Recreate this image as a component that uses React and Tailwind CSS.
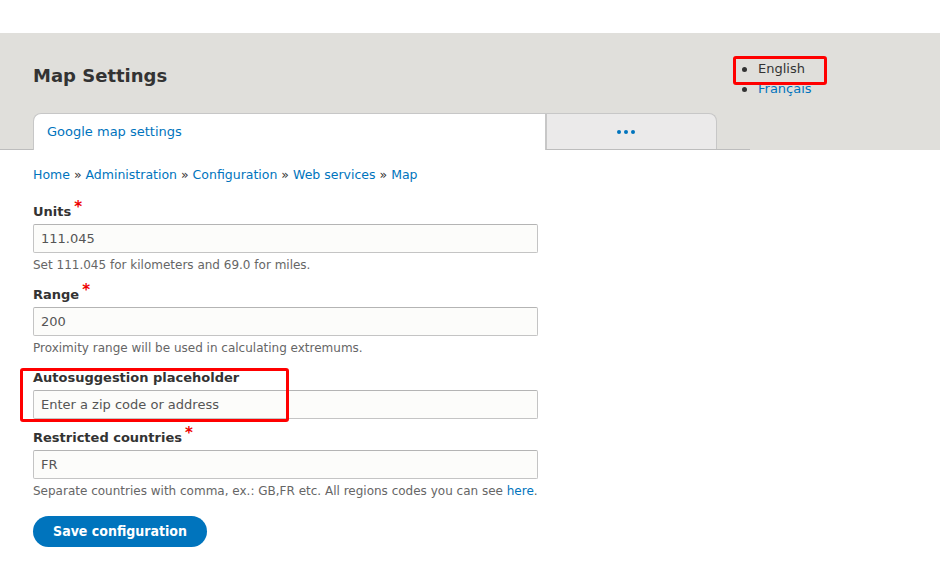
import React from "react";

const fields = [
  {
    label: "Units",
    required: true,
    value: "111.045",
    desc: "Set 111.045 for kilometers and 69.0 for miles.",
  },
  {
    label: "Range",
    required: true,
    value: "200",
    desc: "Proximity range will be used in calculating extremums.",
  },
  {
    label: "Autosuggestion placeholder",
    required: false,
    value: "Enter a zip code or address",
  },
  {
    label: "Restricted countries",
    required: true,
    value: "FR",
    desc: (
      <>
        Separate countries with comma, ex.: GB,FR etc. All regions codes you can see{" "}
        <a className="text-[#0074bd]">here</a>.
      </>
    ),
  },
];

const crumbs = ["Home", "Administration", "Configuration", "Web services", "Map"];

const Field = ({ label, required, value, desc, top }) => (
  <div className={top}>
    <label className="block h-[18px] text-[13px] leading-[18px] font-bold text-[#333]">
      {label}
      {required && (
        <span className="text-[#e00] text-[15px] leading-[0] ml-[3px] relative -top-[4px]">*</span>
      )}
    </label>
    <div className="mt-[3px] w-[505px] h-[29px] border border-[#c4c4c4] border-t-[#b4b4b4] bg-[#fcfcfa] rounded-[2px] px-[7px] flex items-center text-[13px] text-[#555]">
      {value}
    </div>
    {desc && <div className="mt-[4px] text-[12px] leading-[16px] text-[#666]">{desc}</div>}
  </div>
);

export default function App() {
  return (
    <div className="relative w-[940px] h-[582px] bg-white font-['DejaVu_Sans',sans-serif] overflow-hidden">
      <div className="h-[33px]" />

      {/* Header */}
      <div className="flex bg-[#e0dfdb] h-[117px]">
        <div className="w-[750px] flex flex-col">
          <h1 className="pl-[33px] pt-[31px] text-[18px] leading-[24px] font-bold text-[#333]">
            Map Settings
          </h1>
          <div className="mt-auto flex items-end pl-[33px] border-b border-[#bdbdbd] h-[37px]">
            <div className="w-[513px] h-[37px] -mb-px bg-white border border-b-0 border-[#c7c7c7] rounded-tl-[8px] pl-[13px] flex items-center text-[13px] text-[#0074bd]">
              Google map settings
            </div>
            <div className="w-[171px] h-[36px] bg-[#ebeaea] border border-b-0 border-[#c7c7c7] rounded-tr-[8px] flex items-center justify-center gap-[3px] pr-[12px]">
              <span className="w-[4px] h-[4px] rounded-full bg-[#0074bd]" />
              <span className="w-[4px] h-[4px] rounded-full bg-[#0074bd]" />
              <span className="w-[4px] h-[4px] rounded-full bg-[#0074bd]" />
            </div>
          </div>
        </div>
        <ul className="-ml-[8px] pt-[26px] text-[13px] leading-[20px]">
          <li className="flex items-center">
            <span className="w-[5px] h-[5px] rounded-full bg-[#333] mr-[11px]" />
            <span className="text-[#333]">English</span>
          </li>
          <li className="flex items-center">
            <span className="w-[5px] h-[5px] rounded-full bg-[#333] mr-[11px]" />
            <a className="text-[#0074bd]">Français</a>
          </li>
        </ul>
      </div>

      {/* Content */}
      <div className="pl-[33px] pt-[16px]">
        <div className="text-[12.5px] leading-[18px] text-[#0074bd]">
          {crumbs.map((c, i) => (
            <span key={c}>
              {i > 0 && <span className="text-[#333]"> » </span>}
              {c}
            </span>
          ))}
        </div>

        <Field {...fields[0]} top="mt-[19px]" />
        <Field {...fields[1]} top="mt-[13px]" />
        <Field {...fields[2]} top="mt-[13px]" />
        <Field {...fields[3]} top="mt-[10px]" />

        <button className="mt-[17px] w-[174px] h-[31px] rounded-full bg-[#0074bd] text-white text-[14px] font-bold font-['DejaVu_Sans_Condensed','DejaVu_Sans',sans-serif]">
          Save configuration
        </button>
      </div>

      {/* Highlight boxes */}
      <div className="absolute left-[733px] top-[56px] w-[94px] h-[29px] border-[3px] border-[#ff0000] rounded-[3px]" />
      <div className="absolute left-[20px] top-[368px] w-[269px] h-[54px] border-[3px] border-[#ff0000] rounded-[3px]" />
    </div>
  );
}
